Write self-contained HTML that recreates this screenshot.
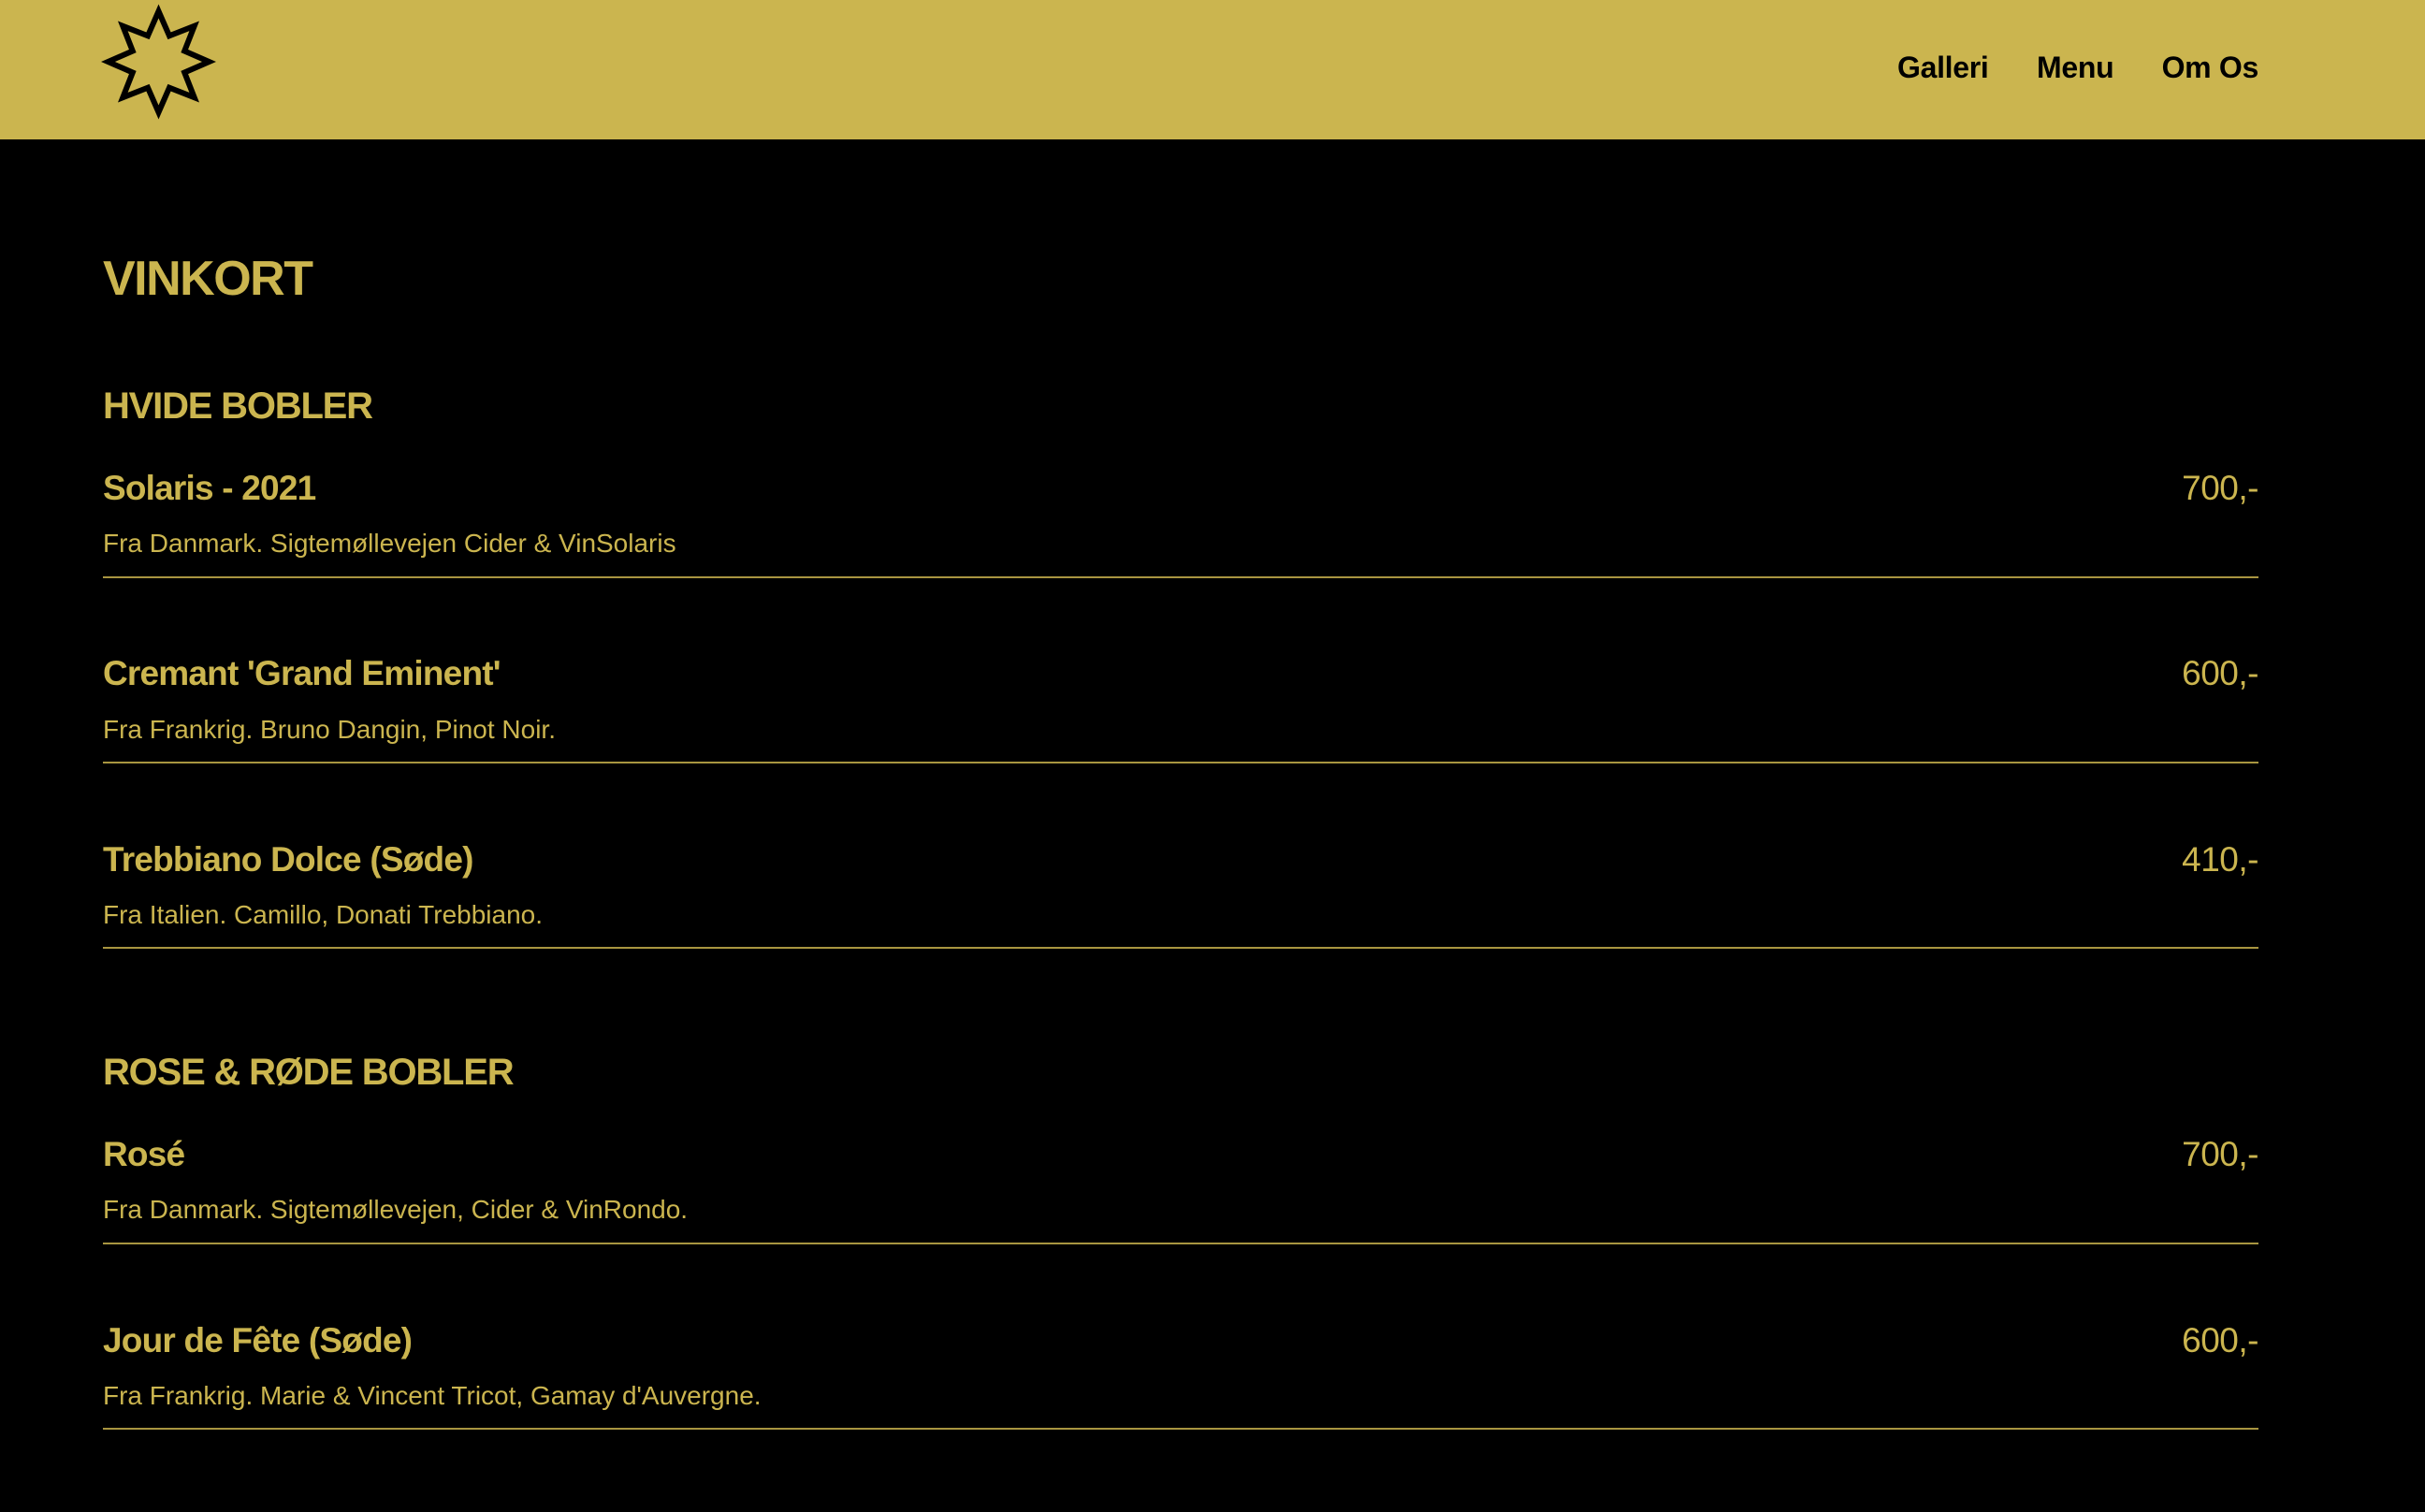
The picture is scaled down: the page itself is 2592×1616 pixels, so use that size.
<!DOCTYPE html>
<html><head><meta charset="utf-8"><style>
*{margin:0;padding:0;box-sizing:border-box}
body{width:2592px;height:1616px;background:#000;position:relative;overflow:hidden;font-family:"Liberation Sans",Arial,sans-serif;color:#cbb54f}
.hdr{position:absolute;left:0;top:0;width:2592px;height:149px;background:#cbb54f}
.t{position:absolute;line-height:1;white-space:nowrap}
.nav{font-size:32px;font-weight:bold;color:#000;top:56px;letter-spacing:-0.3px}
.h1{font-size:52px;font-weight:bold;left:110px;letter-spacing:-1.5px}
.h2{font-size:40px;font-weight:bold;left:110px;letter-spacing:-1.2px}
.nm{font-size:37px;font-weight:bold;left:110px;letter-spacing:-0.8px}
.pr{font-size:37px;right:178px;letter-spacing:-0.5px}
.ds{font-size:28px;left:110px}
.ln{position:absolute;left:110px;width:2304px;height:2px;background:#a89540}
</style></head><body>
<div class="hdr">
<svg width="340" height="149" style="position:absolute;left:0;top:0">
<g transform="translate(169.5,66)">
<polygon points="0,-54 11.5,-27.7 38.2,-38.2 27.7,-11.5 54,0 27.7,11.5 38.2,38.2 11.5,27.7 0,54 -11.5,27.7 -38.2,38.2 -27.7,11.5 -54,0 -27.7,-11.5 -38.2,-38.2 -11.5,-27.7" fill="none" stroke="#000" stroke-width="6" stroke-miterlimit="10"/>
</g></svg>
<div class="t nav" style="left:2028px">Galleri</div>
<div class="t nav" style="left:2177px">Menu</div>
<div class="t nav" style="right:178px">Om Os</div>
</div>
<div class="t h1" style="top:272px">VINKORT</div>
<div class="t h2" style="top:414px">HVIDE BOBLER</div>

<div class="t nm" style="top:503px">Solaris - 2021</div><div class="t pr" style="top:503px">700,-</div>
<div class="t ds" style="top:567px">Fra Danmark. Sigtemøllevejen Cider &amp; VinSolaris</div>
<div class="ln" style="top:616px"></div>

<div class="t nm" style="top:701px">Cremant 'Grand Eminent'</div><div class="t pr" style="top:701px">600,-</div>
<div class="t ds" style="top:766px">Fra Frankrig. Bruno Dangin, Pinot Noir.</div>
<div class="ln" style="top:814px"></div>

<div class="t nm" style="top:900px">Trebbiano Dolce (Søde)</div><div class="t pr" style="top:900px">410,-</div>
<div class="t ds" style="top:964px">Fra Italien. Camillo, Donati Trebbiano.</div>
<div class="ln" style="top:1012px"></div>

<div class="t h2" style="top:1126px">ROSE &amp; RØDE BOBLER</div>

<div class="t nm" style="top:1215px">Rosé</div><div class="t pr" style="top:1215px">700,-</div>
<div class="t ds" style="top:1279px">Fra Danmark. Sigtemøllevejen, Cider &amp; VinRondo.</div>
<div class="ln" style="top:1328px"></div>

<div class="t nm" style="top:1414px">Jour de Fête (Søde)</div><div class="t pr" style="top:1414px">600,-</div>
<div class="t ds" style="top:1478px">Fra Frankrig. Marie &amp; Vincent Tricot, Gamay d'Auvergne.</div>
<div class="ln" style="top:1526px"></div>
</body></html>
